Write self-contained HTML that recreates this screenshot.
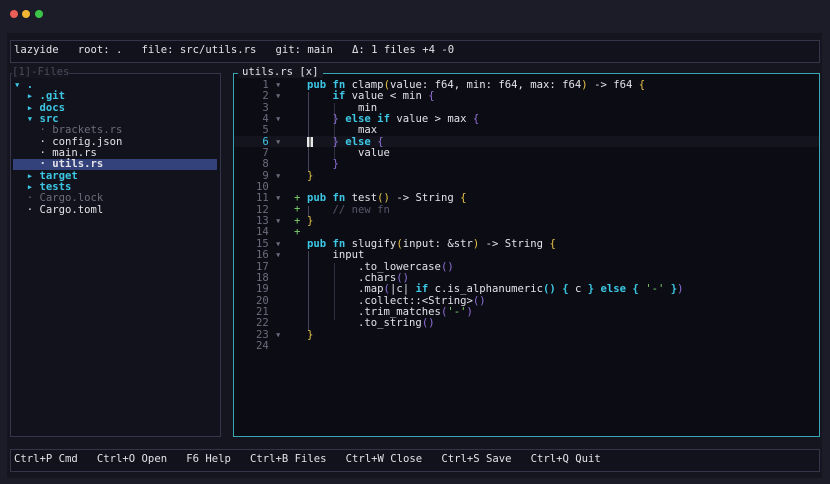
<!DOCTYPE html>
<html><head><meta charset="utf-8"><style>
*{margin:0;padding:0;box-sizing:border-box}
body{width:830px;height:484px;background:#1c1c28;overflow:hidden;position:relative;font-family:"DejaVu Sans Mono","Liberation Mono",monospace;font-size:10.6px;color:#e2e2e8}
.dot{position:absolute;top:10px;width:8px;height:8px;border-radius:50%}
.term{position:absolute;left:7px;top:33px;width:815px;height:445px;background:#151520}
.box{position:absolute;border:1px solid #34344a}
.t{position:absolute;white-space:pre;line-height:11.35px}
.k{color:#3cc8e4;font-weight:bold}
.y{color:#e8c547}
.p{color:#9071d8}
.g{color:#6b6b7c}
.c{color:#55556a}
.pl{color:#7ed36a}
.d{color:#3cc8e4;font-weight:bold}
</style></head><body>
<div class="dot" style="left:10px;background:#ec5f57"></div>
<div class="dot" style="left:22px;background:#f2b634"></div>
<div class="dot" style="left:35px;background:#3cc448"></div>
<div class="term"></div>
<div class="box" style="left:10px;top:40px;width:810px;height:23px;background:#12121c"></div>
<div class="t" style="left:14px;top:45px">lazyide   root: .   file: src/utils.rs   git: main   Δ: 1 files +4 -0</div>

<div class="box" style="left:10px;top:73px;width:211px;height:364px;background:#12121c"></div>
<div class="t g" style="left:12px;top:67px;background:#151520;color:#4a4a5c">[1]-Files</div>
<div style="position:absolute;left:13px;top:159px;width:204px;height:11px;background:#33427a"></div>
<div class="t" style="left:14px;top:80px"><span class="d">▾ .</span>
  <span class="d">▸ .git</span>
  <span class="d">▸ docs</span>
  <span class="d">▾ src</span>
    <span class="g">· brackets.rs</span>
    · config.json
    · main.rs
    <b>· utils.rs</b>
  <span class="d">▸ target</span>
  <span class="d">▸ tests</span>
  <span class="g">· Cargo.lock</span>
  · Cargo.toml</div>

<div class="box" style="left:233px;top:73px;width:587px;height:364px;background:#0c0c15;border-color:#3aa5b5"></div>
<div class="t" style="left:238px;top:67px;background:#151520;padding:0 4px">utils.rs [x]</div>
<div style="position:absolute;left:234px;top:136px;width:585px;height:11px;background:#14141f"></div>
<div style="position:absolute;left:308px;top:92px;width:1px;height:80px;background:#44445a"></div>
<div style="position:absolute;left:334px;top:103px;width:1px;height:57px;background:#2e2e40"></div>
<div style="position:absolute;left:308px;top:206px;width:1px;height:11px;background:#44445a"></div>
<div style="position:absolute;left:308px;top:251px;width:1px;height:80px;background:#44445a"></div>
<div style="position:absolute;left:334px;top:263px;width:1px;height:57px;background:#2e2e40"></div>
<div style="position:absolute;left:307px;top:137px;width:6px;height:10px;border-left:2px solid #e8e8e8;border-right:2px solid #e8e8e8;background:#777"></div>
<div class="t g" style="left:256px;top:80px"> 1
 2
 3
 4
 5
<span style="color:#3cc8e4"> 6</span>
 7
 8
 9
10
11
12
13
14
15
16
17
18
19
20
21
22
23
24</div>
<div class="t g" style="left:275px;top:80px">▾
▾

▾

▾


▾

▾

▾

▾
▾






▾</div>
<div class="t pl" style="left:294px;top:193px">+
+
+
+</div>
<div class="t" style="left:307px;top:80px"><span class="k">pub fn</span> clamp<span class="y">(</span>value: f64, min: f64, max: f64<span class="y">)</span> -&gt; f64 <span class="y">{</span>
    <span class="k">if</span> value &lt; min <span class="p">{</span>
        min
    <span class="p">}</span> <span class="k">else if</span> value &gt; max <span class="p">{</span>
        max
    <span class="p">}</span> <span class="k">else</span> <span class="p">{</span>
        value
    <span class="p">}</span>
<span class="y">}</span>

<span class="k">pub fn</span> test<span class="y">()</span> -&gt; String <span class="y">{</span>
    <span class="c">// new fn</span>
<span class="y">}</span>

<span class="k">pub fn</span> slugify<span class="y">(</span>input: &amp;str<span class="y">)</span> -&gt; String <span class="y">{</span>
    input
        .to_lowercase<span class="p">()</span>
        .chars<span class="p">()</span>
        .map<span class="p">(</span>|c| <span class="k">if</span> c.is_alphanumeric<span class="k">()</span> <span class="k">{</span> c <span class="k">}</span> <span class="k">else</span> <span class="k">{</span> <span class="pl">'-'</span> <span class="k">}</span><span class="p">)</span>
        .collect::&lt;String&gt;<span class="p">()</span>
        .trim_matches<span class="p">(</span><span class="pl">'-'</span><span class="p">)</span>
        .to_string<span class="p">()</span>
<span class="y">}</span>
</div>

<div class="box" style="left:10px;top:449px;width:810px;height:23px;background:#12121c"></div>
<div class="t" style="left:14px;top:454px">Ctrl+P Cmd   Ctrl+O Open   F6 Help   Ctrl+B Files   Ctrl+W Close   Ctrl+S Save   Ctrl+Q Quit</div>
</body></html>
